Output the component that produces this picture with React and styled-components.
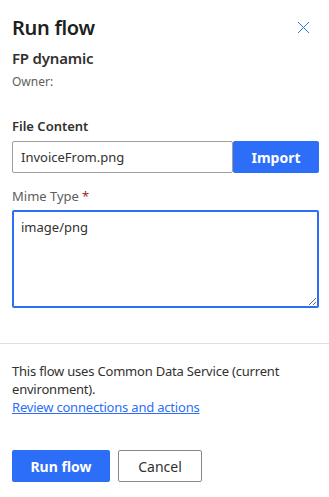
import styled, { createGlobalStyle } from "styled-components";

const Global = createGlobalStyle`
  body {
    margin: 0;
    background: #fff;
    font-family: "Noto Sans", "Open Sans", sans-serif;
    color: #323130;
  }
`;

const Panel = styled.div`
  width: 329px;
  height: 497px;
  display: flex;
  flex-direction: column;
  box-sizing: border-box;
`;

const Body = styled.div`
  padding: 14px 10px 0 12px;
  display: flex;
  flex-direction: column;
`;

const Header = styled.div`
  display: flex;
  justify-content: space-between;
  align-items: flex-start;
`;

const Title = styled.h1`
  margin: 0;
  font-size: 20px;
  font-weight: 600;
  line-height: 28px;
  letter-spacing: -0.3px;
  color: #201f1e;
`;

const Close = styled.button`
  border: none;
  background: none;
  padding: 0;
  margin: 7px 9px 0 0;
  width: 14px;
  height: 14px;
  cursor: pointer;
`;

const FlowName = styled.div`
  margin-top: 6px;
  font-size: 15px;
  font-weight: 600;
  line-height: 20px;
  letter-spacing: -0.2px;
  color: #323130;
`;

const Owner = styled.div`
  margin-top: 6px;
  font-size: 12px;
  line-height: 16px;
  color: #605e5c;
`;

const Label = styled.div`
  margin-top: ${(p) => p.$gap}px;
  font-size: 13px;
  font-weight: ${(p) => (p.$bold ? 600 : 400)};
  line-height: 20px;
  color: ${(p) => (p.$bold ? "#323130" : "#605e5c")};
`;

const Star = styled.span`
  color: #a4262c;
  margin-left: 3px;
`;

const Row = styled.div`
  display: flex;
  margin-top: 5px;
`;

const Input = styled.input`
  flex: 1;
  height: 32px;
  box-sizing: border-box;
  border: 1px solid #a19f9d;
  border-radius: 2px;
  padding: 0 8px;
  font-family: inherit;
  font-size: 13px;
  color: #323130;
  outline: none;
  min-width: 0;
`;

const PrimaryButton = styled.button`
  width: ${(p) => p.$w}px;
  height: 32px;
  border: none;
  border-radius: 2px;
  background: #2d6ef9;
  color: #fff;
  font-family: inherit;
  font-size: 14px;
  font-weight: 700;
  cursor: pointer;
`;

const SecondaryButton = styled.button`
  width: ${(p) => p.$w}px;
  height: 32px;
  border: 1px solid #8a8886;
  border-radius: 2px;
  background: #fff;
  color: #323130;
  font-family: inherit;
  font-size: 14px;
  font-weight: 400;
  cursor: pointer;
`;

const TextArea = styled.textarea`
  margin-top: 4px;
  height: 98px;
  box-sizing: border-box;
  border: 2px solid #2d6ef9;
  border-radius: 2px;
  padding: 6px 7px;
  font-family: inherit;
  font-size: 13px;
  color: #323130;
  outline: none;
  resize: vertical;
`;

const Divider = styled.hr`
  margin: 35px 0 0;
  border: none;
  border-top: 1px solid #e1dfdd;
`;

const Footer = styled.div`
  padding: 18px 12px 0;
`;

const Info = styled.p`
  margin: 0;
  font-size: 13px;
  line-height: 18px;
  letter-spacing: -0.2px;
  color: #323130;
`;

const ReviewLink = styled.a`
  color: #2d6ef9;
  text-decoration: underline;
  cursor: pointer;
`;

const Actions = styled.div`
  display: flex;
  gap: 8px;
  margin-top: 34px;
`;

export default function App() {
  return (
    <Panel>
      <Global />
      <Body>
        <Header>
          <Title>Run flow</Title>
          <Close aria-label="Close">
            <svg width="13" height="13" viewBox="0 0 13 13">
              <path d="M1 1L12 12M12 1L1 12" stroke="#2d6ef9" strokeWidth="1" fill="none" />
            </svg>
          </Close>
        </Header>
        <FlowName>FP dynamic</FlowName>
        <Owner>Owner:</Owner>
        <Label $bold $gap={26}>File Content</Label>
        <Row>
          <Input defaultValue="InvoiceFrom.png" />
          <PrimaryButton $w={86}>Import</PrimaryButton>
        </Row>
        <Label $gap={13}>
          Mime Type<Star>*</Star>
        </Label>
        <TextArea defaultValue="image/png" />
      </Body>
      <Divider />
      <Footer>
        <Info>
          This flow uses Common Data Service (current environment).
          <br />
          <ReviewLink>Review connections and actions</ReviewLink>
        </Info>
        <Actions>
          <PrimaryButton $w={98}>Run flow</PrimaryButton>
          <SecondaryButton $w={84}>Cancel</SecondaryButton>
        </Actions>
      </Footer>
    </Panel>
  );
}
